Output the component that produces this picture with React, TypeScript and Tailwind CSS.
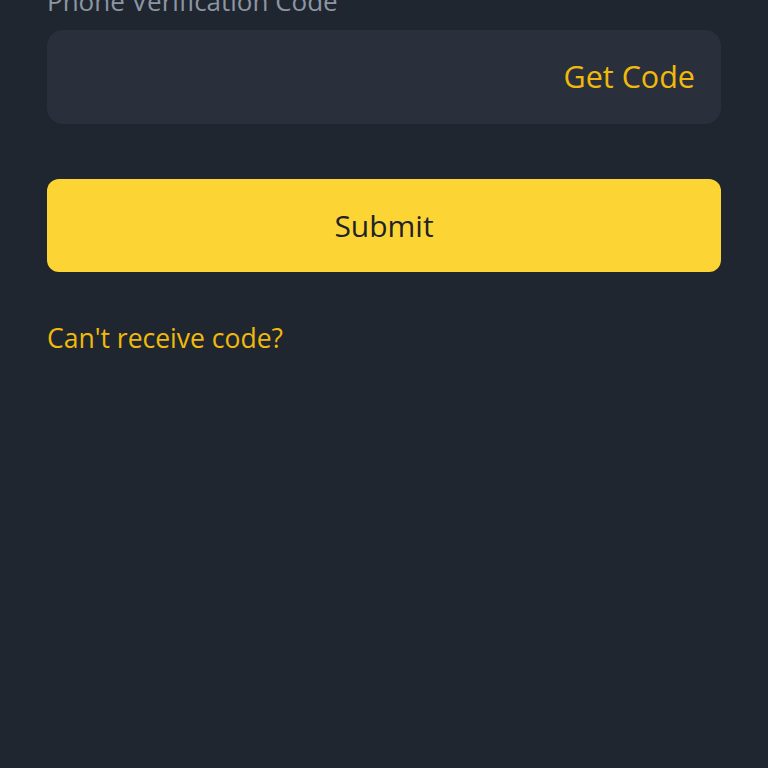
export default function App() {
  return (
    <div className="w-[768px] h-[768px] overflow-hidden bg-[#1f2630] px-[47px]" style={{ fontFamily: "'Open Sans', Lato, sans-serif" }}>
      <div className="-mt-[15px] text-[26px] leading-[32px] text-[#8d95a2]">Phone Verification Code</div>
      <div className="mt-[13px] h-[94px] rounded-[16px] bg-[#2a303b] flex items-center justify-end px-[26px]">
        <span className="text-[30.5px] font-medium text-[#f0b90b]">Get Code</span>
      </div>
      <button className="mt-[55px] w-full h-[93px] rounded-[12px] bg-[#fcd535] text-[#1e2329] text-[30px] font-medium flex items-center justify-center">
        Submit
      </button>
      <div className="mt-[50px] text-[26.5px] leading-[32px] font-medium text-[#f0b90b]">Can't receive code?</div>
    </div>
  );
}
